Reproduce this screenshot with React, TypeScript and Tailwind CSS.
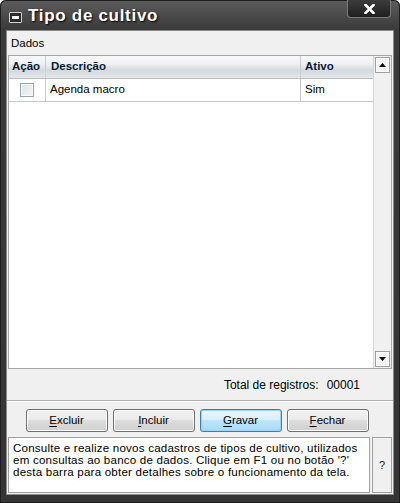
import React from "react";

const font = { fontFamily: '"Liberation Sans", Arial, sans-serif' };

function Btn({ label, u, primary }: { label: string; u: string; primary?: boolean }) {
  const rest = label.slice(1);
  return (
    <div
      className={
        "w-[82px] h-[23px] rounded-[3px] border flex items-center justify-center text-[11.5px] text-black " +
        (primary
          ? "border-[#3c7fb1] bg-[linear-gradient(to_bottom,#eaf6fd_0%,#d9f0fc_45%,#bee6fd_50%,#a7d9f5_100%)] shadow-[inset_0_0_0_1px_#9ad3f3]"
          : "border-[#707070] bg-[linear-gradient(to_bottom,#f2f2f2_0%,#ebebeb_45%,#dddddd_50%,#cfcfcf_100%)] shadow-[inset_0_0_0_1px_#fcfcfc]")
      }
    >
      <span>
        <span className="underline underline-offset-2">{u}</span>
        {rest}
      </span>
    </div>
  );
}

export default function App() {
  return (
    <div className="w-[400px] h-[503px] bg-white" style={font}>
      <div className="w-[400px] h-[503px] rounded-t-[6px] bg-[linear-gradient(to_bottom,#5c5c5c_0px,#3a3a3a_30px,#353535_100%)] flex flex-col px-[6px] pb-[8px] shadow-[inset_0_0_0_1px_#1e1e1e]">
        {/* title bar */}
        <div className="h-[30px] shrink-0 flex items-start relative">
          <div className="mt-[12px] ml-[3px] w-[13px] h-[11px] border border-[#d0d0d0] rounded-[1px] bg-[#2a2a2a] flex items-center justify-center">
            <div className="w-[7px] h-[3px] bg-white" />
          </div>
          <div className="ml-[6px] mt-[3px] text-[17px] tracking-[0.7px] font-bold text-white [text-shadow:1px_1px_2px_#000]">
            Tipo de cultivo
          </div>
          <div className="absolute right-[3px] top-0 w-[44px] h-[18px] rounded-b-[4px] border border-t-0 border-[#7a7a7a] bg-[linear-gradient(to_bottom,#3c3c3c,#1f1f1f)] flex items-center justify-center">
            <svg width="11" height="10" viewBox="0 0 11 10">
              <path d="M1.5 1 L9.5 9 M9.5 1 L1.5 9" stroke="#fff" strokeWidth="2.6" strokeLinecap="square" />
            </svg>
          </div>
        </div>
        {/* client */}
        <div className="flex-1 bg-[#f0f0f0] flex flex-col border border-[#8a8a8a] text-[11.5px] text-black">
          <div className="h-[24px] shrink-0 pl-[4px] pt-[6px] leading-[13px]">Dados</div>
          {/* grid */}
          <div className="h-[314px] shrink-0 mx-[1px] flex border border-[#a8a8a8] bg-white">
            <div className="flex-1 flex flex-col">
              <div className="h-[23px] flex font-bold text-[#0b1a33] border-b border-[#b8bec4] bg-[linear-gradient(to_bottom,#f7f8f9_0%,#eef1f3_35%,#d3dade_65%,#e4e8eb_100%)]">
                <div className="w-[37px] border-r border-[#c9ced2] flex items-center pl-[3px]">Ação</div>
                <div className="w-[255px] border-r border-[#c9ced2] flex items-center pl-[5px]">Descrição</div>
                <div className="flex-1 flex items-center pl-[4px]">Ativo</div>
              </div>
              <div className="h-[23px] flex border-b border-[#c8c8c8]">
                <div className="w-[37px] border-r border-[#c8c8c8] flex items-center justify-center">
                  <div className="w-[14px] h-[14px] border border-[#9aa3ab] bg-[linear-gradient(135deg,#dfe3e7,#f4f6f8)] shadow-[inset_0_0_0_1px_#f8f9fa]" />
                </div>
                <div className="w-[255px] border-r border-[#c8c8c8] flex items-center pl-[4px]">Agenda macro</div>
                <div className="flex-1 flex items-center pl-[4px]">Sim</div>
              </div>
            </div>
            {/* scrollbar */}
            <div className="w-[18px] bg-[#f0f0f0] border-l border-[#d8d8d8] flex flex-col justify-between p-[1px]">
              <div className="h-[16px] border border-[#a0a0a0] bg-[#f4f4f4] flex items-center justify-center shadow-[inset_0_0_0_1px_#fff]">
                <svg width="7" height="4" viewBox="0 0 7 4"><path d="M0 4 L3.5 0 L7 4 Z" fill="#000" /></svg>
              </div>
              <div className="h-[16px] border border-[#a0a0a0] bg-[#f4f4f4] flex items-center justify-center shadow-[inset_0_0_0_1px_#fff]">
                <svg width="7" height="4" viewBox="0 0 7 4"><path d="M0 0 L3.5 4 L7 0 Z" fill="#000" /></svg>
              </div>
            </div>
          </div>
          {/* total */}
          <div className="h-[32px] shrink-0 flex items-center justify-end pr-[33px] border-b border-[#b0b0b0] text-[12px]">
            <span>Total de registros:</span>
            <span className="ml-[8px]">00001</span>
          </div>
          {/* buttons */}
          <div className="h-[36px] shrink-0 border-t border-white flex items-center justify-center gap-[5px] pt-[2px] pr-[6px]">
            <Btn label="Excluir" u="E" />
            <Btn label="Incluir" u="I" />
            <Btn label="Gravar" u="G" primary />
            <Btn label="Fechar" u="F" />
          </div>
          {/* help */}
          <div className="flex-1 flex gap-[2px] px-[1px] pb-[1px]">
            <div className="flex-1 bg-white border border-[#a0a0a0] px-[4px] pt-[4px] leading-[12px] text-[11.6px] tracking-[0.2px] whitespace-nowrap">
              Consulte e realize novos cadastros de tipos de cultivo, utilizados
              <br />
              em consultas ao banco de dados. Clique em F1 ou no botão '?'
              <br />
              desta barra para obter detalhes sobre o funcionamento da tela.
            </div>
            <div className="w-[20px] border border-[#a0a0a0] bg-[#f0f0f0] flex items-center justify-center text-[#223] text-[11px]">
              ?
            </div>
          </div>
        </div>
      </div>
    </div>
  );
}
